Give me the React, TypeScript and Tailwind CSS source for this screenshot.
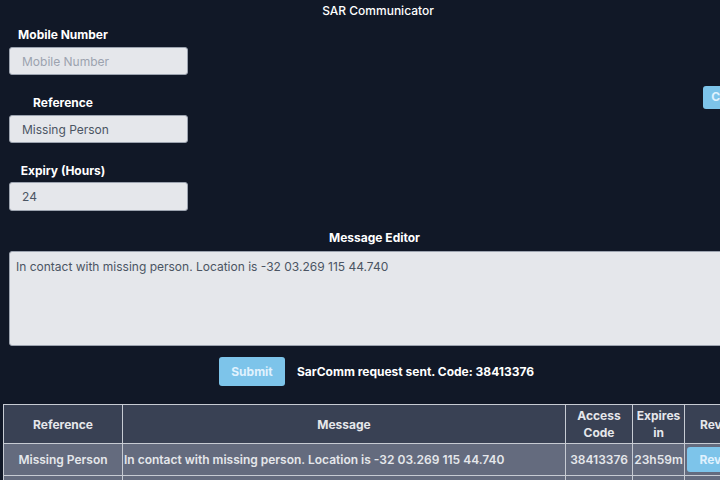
import React from "react";

export default function App() {
  const font = { fontFamily: "Inter, 'Noto Sans', sans-serif" };
  return (
    <div className="w-[720px] h-[480px] overflow-hidden bg-[#111827]" style={font}>
      <div className="w-[756px] text-white">
        <div className="h-[22px] flex items-center justify-center text-[12px] font-medium text-white">SAR Communicator</div>
        <div className="flex">
          <div className="flex flex-col pl-[9px]">
            <div className="w-[108px] text-center text-[12px] font-bold leading-[16px] mt-[5px]">Mobile Number</div>
            <input
              className="mt-[4px] w-[179px] h-[28px] rounded-[3px] bg-[#e5e7eb] border border-[#9ca3af] px-[12px] text-[12px] text-[#4b5563] placeholder:text-[#9ca3af] outline-none"
              placeholder="Mobile Number"
            />
            <div className="w-[108px] text-center text-[12px] font-bold leading-[16px] mt-[20px]">Reference</div>
            <input
              className="mt-[4px] w-[179px] h-[28px] rounded-[3px] bg-[#e5e7eb] border border-[#9ca3af] px-[12px] text-[12px] text-[#4b5563] outline-none"
              defaultValue="Missing Person"
            />
            <div className="w-[108px] text-center text-[12px] font-bold leading-[16px] mt-[20px]">Expiry (Hours)</div>
            <input
              className="mt-[3px] w-[179px] h-[29px] rounded-[3px] bg-[#e5e7eb] border border-[#9ca3af] px-[12px] text-[12px] text-[#4b5563] outline-none"
              defaultValue="24"
            />
          </div>
          <div className="flex-1" />
          <div className="pt-[61px] pr-[6px]">
            <button className="h-[23px] px-[8px] rounded-[3px] bg-[#7dc4ea] text-[12px] font-bold text-[#e0f2fe]">Copy</button>
          </div>
        </div>
        <div className="w-[740px] pl-[9px]">
          <div className="text-center text-[12px] font-bold leading-[16px] mt-[19px]">Message Editor</div>
          <textarea
            className="mt-[5px] block w-[731px] h-[95px] rounded-[3px] bg-[#e5e7eb] border border-[#9ca3af] px-[6px] py-[7px] text-[12px] leading-[16px] text-[#4b5563] outline-none resize-none"
            defaultValue="In contact with missing person. Location is -32 03.269 115 44.740"
          />
        </div>
        <div className="flex items-center mt-[11px] pl-[219px] gap-[12px]">
          <button className="w-[66px] h-[29px] rounded-[3px] bg-[#7dc4ea] text-[12px] font-bold text-[#e0f2fe]">Submit</button>
          <span className="text-[12px] font-bold text-white">SarComm request sent. Code: 38413376</span>
        </div>
        <div className="mt-[18px] pl-[3px]">
          <table className="border-collapse text-[12px] text-[#e5e7eb]">
            <thead>
              <tr className="bg-[#394154] h-[39px]">
                <th className="w-[119px] border border-[#c7cbd3] font-bold leading-[17px]">Reference</th>
                <th className="w-[443px] border border-[#c7cbd3] font-bold leading-[17px]">Message</th>
                <th className="w-[67px] border border-[#c7cbd3] font-bold leading-[17px]">Access<br />Code</th>
                <th className="w-[52px] border border-[#c7cbd3] font-bold leading-[17px]">Expires<br />in</th>
                <th className="w-[70px] border border-[#c7cbd3] font-bold leading-[17px]">Reveal</th>
              </tr>
            </thead>
            <tbody>
              <tr className="bg-[#646b7e] h-[32px]">
                <td className="border border-[#c7cbd3] text-center font-semibold">Missing Person</td>
                <td className="border border-[#c7cbd3] pl-[1px] font-semibold whitespace-nowrap">In contact with missing person. Location is -32 03.269 115 44.740</td>
                <td className="border border-[#c7cbd3] text-center font-semibold">38413376</td>
                <td className="border border-[#c7cbd3] text-center font-semibold">23h59m</td>
                <td className="border border-[#c7cbd3] px-[2px]">
                  <button className="h-[25px] w-[64px] rounded-[3px] bg-[#7dc4ea] text-[12px] font-bold text-[#e0f2fe]">Reveal</button>
                </td>
              </tr>
              <tr className="bg-[#646b7e] h-[32px]">
                <td className="border border-[#c7cbd3]"></td>
                <td className="border border-[#c7cbd3]"></td>
                <td className="border border-[#c7cbd3]"></td>
                <td className="border border-[#c7cbd3]"></td>
                <td className="border border-[#c7cbd3]"></td>
              </tr>
            </tbody>
          </table>
        </div>
      </div>
    </div>
  );
}
